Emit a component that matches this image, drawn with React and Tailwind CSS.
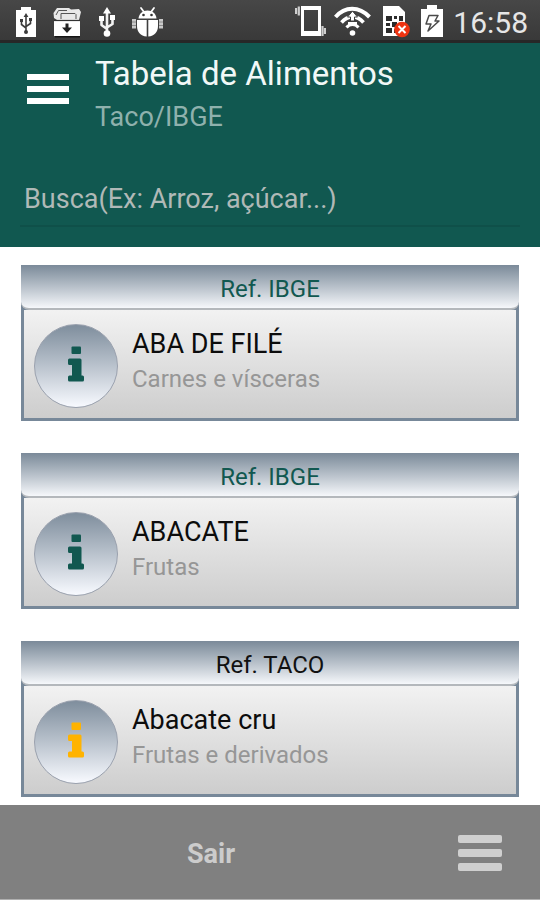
import { useState } from 'react'

const FOODS = [
  { id: 1, source: 'IBGE', name: 'ABA DE FILÉ', group: 'Carnes e vísceras' },
  { id: 2, source: 'IBGE', name: 'ABACATE', group: 'Frutas' },
  { id: 3, source: 'TACO', name: 'Abacate cru', group: 'Frutas e derivados' },
]

function UsbBatteryIcon() {
  return (
    <svg width="20" height="32" viewBox="0 0 20 32" aria-hidden="true">
      <path fill="#fff" d="M5 1h10v3h5v27H0V4h5z" />
      <g stroke="#3c3c3c" strokeWidth="1.6" fill="none">
        <path d="M10 10v16M5.5 15v3.5L10 22M14.5 14v3.5L10 20.5" />
      </g>
      <path fill="#3c3c3c" d="M10 7l2.4 4H7.6zM4 13h3v3H4zM13 12h3v3h-3z" />
      <circle cx="10" cy="26" r="2" fill="#3c3c3c" />
    </svg>
  )
}

function DownloadBoxIcon() {
  return (
    <svg width="30" height="32" viewBox="0 0 30 32" aria-hidden="true">
      <path fill="#e8e8e8" d="M1.500 7L5 2l12 0 2 1.500 8-.5 2 3-2 8H5L2 12z" />
      <path fill="none" stroke="#555" strokeWidth="1" d="M4 9l2.500-4.500 8.500 0M9 13V7.500h14l1 1V13" />
      <path fill="#fff" d="M2 15h26v15H2z" />
      <path stroke="#333" strokeWidth="1.200" d="M2 14.500h26" />
      <path fill="#222" d="M13.500 17.500h3v4H20L15 27l-5-5.500h3.500z" />
      <path fill="#151515" d="M3 30h25v1.500H3z" />
    </svg>
  )
}

function UsbIcon() {
  return (
    <svg width="18" height="32" viewBox="0 0 18 32" aria-hidden="true">
      <path fill="none" stroke="#f2f2f2" strokeWidth="2.600" strokeLinejoin="round" d="M9 5v23M3.500 13v6L9 23M14.500 12v6L9 21.500" />
      <path fill="#fff" d="M9 1l4 6.500H5zM1 10h5v5H1zM12 9h5v5h-5z" />
      <circle cx="9" cy="27.500" r="3.300" fill="#fff" />
    </svg>
  )
}

function DebugIcon() {
  return (
    <svg width="31" height="32" viewBox="0 0 31 32" aria-hidden="true">
      <path stroke="#fff" strokeWidth="1.800" strokeLinecap="round" d="M9 2l3 4M22 2l-3 4" />
      <path fill="#fff" d="M6.500 12.500C7 7.500 10.500 4.500 15.500 4.500s8.500 3 9 8z" />
      <circle cx="11.500" cy="9" r="1.300" fill="#333" />
      <circle cx="19.500" cy="9" r="1.300" fill="#333" />
      <path fill="#fff" d="M5 14h9.700v16.500C8.500 30 5 26 5 20zM16.300 14H26v6c0 6-3.500 10-9.700 10.500z" />
      <path fill="#c9c9c9" d="M0 13h4v9.500H0zM27 13h4v9.500h-4z" />
      <path stroke="#8a8a8a" strokeWidth="1" d="M0 16h4M0 19.500h4M27 16h4M27 19.500h4" />
    </svg>
  )
}

function VibrateIcon() {
  return (
    <svg width="31" height="32" viewBox="0 0 31 32" aria-hidden="true">
      <path fill="#fff" fillRule="evenodd" d="M6 1h20v30H6zM9 5v21h14V5z" />
      <path stroke="#cfcfcf" strokeWidth="2.200" d="M3.800 1.500v9M1 3v6M27.500 21v10M30 23v6" />
    </svg>
  )
}

function WifiIcon() {
  return (
    <svg width="39" height="32" viewBox="0 0 39 32" aria-hidden="true">
      <g fill="none" stroke="#fff">
        <path strokeWidth="4" d="M1.500 12C11 1 25 1 35.500 12" />
        <path strokeWidth="3.600" d="M7.500 17.500c6.500-7.500 15.500-7.500 22 0" />
        <path strokeWidth="3" d="M12.500 22.500c3.500-4 8.500-4 12 0" />
      </g>
      <path fill="#fff" stroke="#3c3c3c" strokeWidth="1" d="M18.500 6l5 6h-3v4h-4v-4h-3z" />
      <path fill="#fff" d="M14 17h9v3h-9z" />
      <circle cx="18.500" cy="28" r="2.800" fill="#fff" />
    </svg>
  )
}

function NoSimIcon() {
  return (
    <svg width="30" height="34" viewBox="0 0 30 34" aria-hidden="true">
      <path fill="#fff" d="M2 2h16l6 6v24H2z" />
      <path fill="#2c2c2c" d="M5 12h6v5H5zM13 12h3v3h-3zM18 12h4v5h-4zM5 19h4v3H5zM11 18h5v5h-5zM18 19h4v3h-4zM5 24h6v5H5zM13 25h4v4h-4z" />
      <circle cx="21" cy="25.500" r="7.800" fill="#ee3311" />
      <path stroke="#fff" strokeWidth="2" d="M17.500 22l7 7M24.500 22l-7 7" />
    </svg>
  )
}

function ChargingIcon() {
  return (
    <svg width="26" height="34" viewBox="0 0 26 34" aria-hidden="true">
      <path fill="#fff" d="M8 1h10v4h6v28H2V5h6z" />
      <path fill="#fff" stroke="#4a4a4a" strokeWidth="1.500" strokeLinejoin="round" d="M10 11.500h9L16 17h4L9 27l3-7H7z" />
    </svg>
  )
}

// slab "i" drawn inside the round button
function InfoGlyph() {
  return (
    <svg width="16" height="36" viewBox="0 0 16 36" fill="currentColor" aria-hidden="true">
      <rect x="3.500" y="0.500" width="9.500" height="7.500" rx="1" />
      <path d="M1.500 12.500H12a1.500 1.500 0 0 1 1.500 1.500v15.500h1a1.500 1.500 0 0 1 1.500 1.500v3a1.500 1.500 0 0 1-1.500 1.500h-13A1.500 1.500 0 0 1 0 34v-3a1.500 1.500 0 0 1 1.500-1.500H4V19H1.500A1.500 1.500 0 0 1 0 17.500V14a1.500 1.500 0 0 1 1.500-1.500z" />
    </svg>
  )
}

function StatusBar() {
  return (
    <div className="flex h-[43px] items-center justify-between border-b-3 border-[#272727] bg-linear-to-b from-[#474747] to-[#393939] pl-4 pr-3">
      <div className="flex items-center gap-4 pt-1">
        <UsbBatteryIcon />
        <DownloadBoxIcon />
        <UsbIcon />
        <DebugIcon />
      </div>
      <div className="flex items-center gap-2 pt-0.5">
        <VibrateIcon />
        <WifiIcon />
        <NoSimIcon />
        <ChargingIcon />
        <span className="pt-1 text-[30px] leading-8 text-[#e6e6e6]">16:58</span>
      </div>
    </div>
  )
}

function Header({ query, onQuery }) {
  return (
    <header className="bg-[#115850] px-5 pb-5">
      <div className="flex items-start gap-[26px] pt-3">
        <button type="button" aria-label="Menu" className="mt-[19px] ml-[7px] flex w-[42px] flex-col gap-1.5">
          <span className="h-1.5 w-full bg-white" />
          <span className="h-1.5 w-full bg-white" />
          <span className="h-1.5 w-full bg-white" />
        </button>
        <div>
          <h1 className="text-[33px] leading-[38px] text-[#f1f8f7]">Tabela de Alimentos</h1>
          <p className="pt-1 text-[27px] leading-10 text-[#8fb1ad]">Taco/IBGE</p>
        </div>
      </div>
      <input
        type="text"
        aria-label="Busca"
        placeholder="Busca(Ex: Arroz, açúcar...)"
        value={query}
        onChange={(e) => onQuery(e.target.value)}
        className="mt-[34px] block h-[56px] w-full border-b-2 border-[#0f5049] bg-transparent px-1 pt-0.5 text-[27px] text-white outline-none placeholder:text-[#b0b9b7]"
      />
    </header>
  )
}

function FoodCard({ food }) {
  const taco = food.source === 'TACO'
  return (
    <li className="bg-[#778899] pb-[3px]">
      <div className="rounded-b-lg border-b-2 border-[#b4b8bc] bg-linear-to-b from-[#7b8a99] to-[#f6f8fb]">
        <p className={`h-[43px] pt-1 text-center text-[24px] leading-10 ${taco ? 'text-[#111111]' : 'text-[#115850]'}`}>
          Ref. {food.source}
        </p>
      </div>
      <div className="mx-[3px] flex items-start gap-3.5 bg-linear-to-b from-[#f2f2f2] to-[#cdcdcd] px-2.5 pt-3.5 pb-2.5">
        <button
          type="button"
          aria-label={`Informações de ${food.name}`}
          className={`flex size-[84px] shrink-0 items-center justify-center rounded-full border border-[#9aa1ae] bg-linear-to-b from-[#7f8e9d] to-[#f8faff] pb-1 ${taco ? 'text-[#ffb300]' : 'text-[#115850]'}`}
        >
          <InfoGlyph />
        </button>
        <div className="min-w-0">
          <h2 className="text-[27px] leading-10 text-[#0c0c0c]">{food.name}</h2>
          <p className="text-[24px] leading-[30px] text-[#969696]">{food.group}</p>
        </div>
      </div>
    </li>
  )
}

function Footer() {
  return (
    <footer className="flex h-[95px] items-center border-b border-[#b0b0b0] bg-[#808080] pt-0.5 pr-[38px]">
      <button type="button" className="h-full flex-1 pt-0.5 text-center text-[27px] font-bold text-[#cccccc]">
        Sair
      </button>
      <button type="button" aria-label="Opções" className="ml-9 flex w-11 flex-col gap-1.5">
        <span className="h-2 w-full rounded-xs bg-[#cfcfcf]" />
        <span className="h-2 w-full rounded-xs bg-[#cfcfcf]" />
        <span className="h-2 w-full rounded-xs bg-[#cfcfcf]" />
      </button>
    </footer>
  )
}

export default function App() {
  const [query, setQuery] = useState('')
  const foods = FOODS.filter((f) => f.name.toLowerCase().includes(query.toLowerCase()))

  return (
    <div className="flex min-h-screen flex-col bg-white font-[Roboto,sans-serif]">
      <StatusBar />
      <Header query={query} onQuery={setQuery} />
      <main className="flex-1 px-[21px] pt-[18px] pb-2">
        <ul className="flex flex-col gap-8">
          {foods.map((food) => (
            <FoodCard key={food.id} food={food} />
          ))}
        </ul>
      </main>
      <Footer />
    </div>
  )
}
